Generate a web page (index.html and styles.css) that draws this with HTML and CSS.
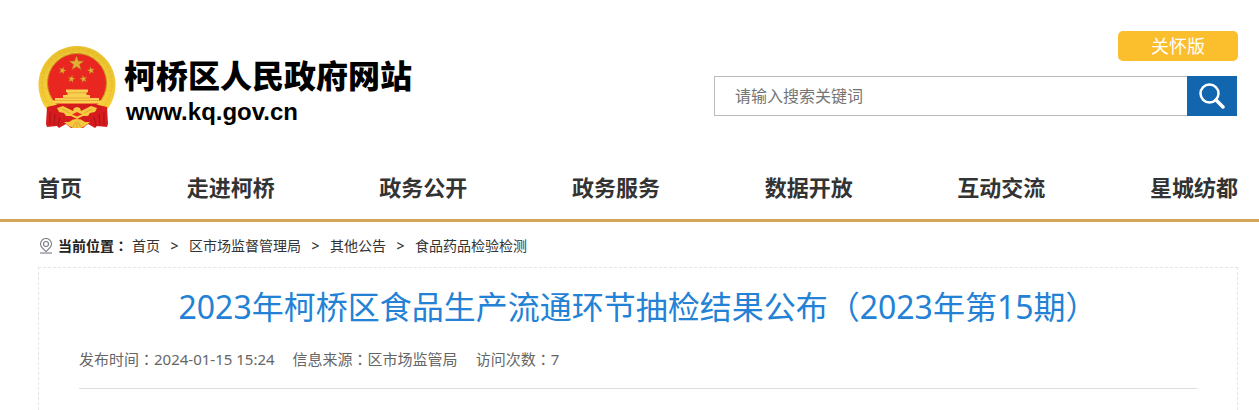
FILE: index.html
```html
<!DOCTYPE html>
<html lang="zh-CN">
<head>
<meta charset="utf-8">
<meta name="viewport" content="width=device-width, initial-scale=1">
<title>2023年柯桥区食品生产流通环节抽检结果公布（2023年第15期）</title>
<link rel="stylesheet" href="styles.css">
</head>
<body>
<header class="header">
  <div class="wrap header-row">
    <a class="brand" href="#">
      <svg class="emblem" viewBox="0 0 78 84" aria-hidden="true">
        <defs>
          <linearGradient id="gold" x1="0" y1="0" x2="0" y2="1">
            <stop offset="0" stop-color="#e8c02c"/><stop offset="1" stop-color="#f7cd38"/>
          </linearGradient>
          <path id="star" d="M0-7.5 1.8-2.4 7.1-2.3 2.9.9 4.4 6.1 0 3.1-4.4 6.1-2.9.9-7.1-2.3-1.8-2.4Z"/>
        </defs>
        <path fill="url(#gold)" d="M39 0C60 0 77.500 17 77.500 38.500 77.500 50 73 60 66 67L12 67C5 60 .5 50 .5 38.500.5 17 18 0 39 0Z"/>
        <circle cx="39" cy="38" r="35" fill="none" stroke="#d9ae25" stroke-width=".6" stroke-dasharray="3 2"/>
        <circle cx="39" cy="38" r="31.500" fill="none" stroke="#f7d655" stroke-width=".6" stroke-dasharray="5 3"/>
        <circle cx="39" cy="37" r="29.500" fill="#e92620" stroke="#c9911e" stroke-width="1"/>
        <g fill="#e0b035" stroke="#b87a20" stroke-width=".5">
          <use href="#star" transform="translate(38.500 17.500)"/>
          <use href="#star" transform="translate(24.500 24.500) rotate(18) scale(.5)"/>
          <use href="#star" transform="translate(53 24.500) rotate(-12) scale(.5)"/>
          <use href="#star" transform="translate(33.500 33) rotate(12) scale(.5)"/>
          <use href="#star" transform="translate(45.500 33) rotate(-12) scale(.5)"/>
        </g>
        <path fill="#d51b1d" d="M9 61 22 58H56L69 61 70 78 69 81 59 80 57 82 50 78 45 82H33L28 78 21 82 19 80 9 81 8 78Z"/>
        <path fill="none" stroke="#a91217" d="M12 66 12 79M17 68 16 79M22 71 20 80M66 66 66 79M61 68 62 79M56 71 58 80"/>
        <path fill="#fad050" d="M28 43.500H50V46L48.500 46.500V49H52V52H61V54.500H63V57.500H15V54.500H17V52H25V49H29.500V46.500L28 46Z"/>
        <path fill="none" stroke="#dc9428" stroke-width=".6" d="M29.500 46.800H48.500M25 52H52M17 54.500H61"/>
        <path fill="#f6c842" d="M19 62 25 60 31 63 35 65 36 62 39 61 42 62 43 65 47 63 53 60 59 62 57 66 52 67 50 70 45 70 39 73 33 70 28 70 26 67 21 66Z"/>
        <path fill="#e92620" d="M34 68.500 39 66 44 68.500 39 70.500Z"/>
        <path fill="#f6c842" d="M26 76 31 76 35 73.500 39 73 43 73.500 47 76 52 76 47 80 43 82H35L31 80Z"/>
        <path fill="none" stroke="#cf902a" stroke-width=".6" d="M24 63 32 67M54 63 46 67M35 81 38 76M43 81 40 76M39 76V82"/>
      </svg>
      <span class="brand-text">
        <span class="brand-name">柯桥区人民政府网站</span>
        <span class="brand-url">www.kq.gov.cn</span>
      </span>
    </a>
    <div class="tools">
      <button class="care" type="button">关怀版</button>
      <form class="search">
        <input class="search-input" type="text" placeholder="请输入搜索关键词" aria-label="请输入搜索关键词">
        <button class="search-btn" type="submit" aria-label="搜索">
          <svg class="search-icon" viewBox="0 0 26 26" aria-hidden="true">
            <circle cx="10.500" cy="10.500" r="9" fill="none" stroke="#fff" stroke-width="2.500"/>
            <path d="M17 17 24 24" stroke="#fff" stroke-width="3.500" stroke-linecap="round"/>
          </svg>
        </button>
      </form>
    </div>
  </div>
</header>
<nav class="nav">
  <div class="wrap nav-row">
    <a href="#">首页</a>
    <a href="#">走进柯桥</a>
    <a href="#">政务公开</a>
    <a href="#">政务服务</a>
    <a href="#">数据开放</a>
    <a href="#">互动交流</a>
    <a href="#">星城纺都</a>
  </div>
</nav>
<main class="wrap">
  <div class="crumbs">
    <svg class="pin" viewBox="0 0 14 16" aria-hidden="true">
      <g fill="none" stroke="#777b85" stroke-width="1.100">
        <path d="M7 13.500C4 10.800 1.500 9 1.500 6a5.500 5.500 0 0 1 11 0C12.500 9 10 10.800 7 13.500Z"/>
        <circle cx="7" cy="6" r="2.500"/>
        <path d="M1 15H13"/>
      </g>
    </svg>
    <strong class="crumb-label">当前位置<span class="colon">：</span></strong>
    <a href="#">首页</a><span class="sep">&gt;</span>
    <a href="#">区市场监督管理局</a><span class="sep">&gt;</span>
    <a href="#">其他公告</a><span class="sep">&gt;</span>
    <a href="#">食品药品检验检测</a>
  </div>
  <article class="article">
    <h1 class="title">2023年柯桥区食品生产流通环节抽检结果公布（2023年第15期）</h1>
    <div class="meta">
      <span>发布时间<span class="colon">：</span>2024-01-15 15:24</span>
      <span>信息来源<span class="colon">：</span>区市场监管局</span>
      <span>访问次数<span class="colon">：</span>7</span>
    </div>
  </article>
</main>
</body>
</html>
```

FILE: styles.css
```css
* {
  box-sizing: border-box;
}

html,
body {
  height: 100%;
}

body {
  display: flex;
  flex-direction: column;
  margin: 0;
  background: #fff;
  color: #333;
  font-family: "Noto Sans", "Noto Sans CJK SC", sans-serif;
  font-size: 14px;
}

a {
  color: inherit;
  text-decoration: none;
}

button,
input {
  font: inherit;
}

.wrap {
  width: 100%;
  padding: 0 21px 0 38px;
}

.header-row {
  display: flex;
  justify-content: space-between;
  padding-top: 31px;
}

.brand {
  display: flex;
  gap: 8px;
  padding-top: 15px;
  color: #000;
}

.emblem {
  width: 78px;
  height: 84px;
}

.brand-text {
  display: flex;
  flex-direction: column;
  padding-top: 10px;
}

.brand-name {
  font-size: 32px;
  font-weight: 900;
  line-height: 40px;
}

.brand-url {
  padding-left: 2px;
  font-family: "Liberation Sans", sans-serif;
  font-size: 24px;
  font-weight: 700;
  line-height: 32px;
}

.tools {
  display: flex;
  flex: 0 1 524px;
  flex-direction: column;
  align-items: flex-end;
  gap: 15px;
}

.care {
  width: 120px;
  height: 30px;
  padding: 0;
  border: 0;
  border-radius: 5px;
  background: #fbbe2c;
  color: #fff;
  font-size: 18px;
  line-height: 30px;
}

.search {
  display: flex;
  width: 100%;
  padding-right: 1px;
}

.search-input {
  flex: 1;
  min-width: 0;
  height: 40px;
  padding: 0 20px;
  border: 1px solid #bbb;
  border-right: 0;
  border-radius: 0;
  font-size: 16px;
}

.search-input::placeholder {
  color: #757575;
}

.search-btn {
  display: flex;
  align-items: center;
  justify-content: center;
  width: 50px;
  height: 40px;
  padding: 0;
  border: 0;
  background: #1266ad;
}

.search-icon {
  width: 26px;
  height: 26px;
}

.nav {
  margin-top: 27px;
  border-bottom: 3px solid #d3a658;
}

.nav-row {
  display: flex;
  justify-content: space-between;
  padding-bottom: 2px;
  font-size: 22px;
  font-weight: 700;
  line-height: 60px;
}

main.wrap {
  display: flex;
  flex: 1;
  flex-direction: column;
}

.crumbs {
  display: flex;
  align-items: center;
  padding: 9px 0 6px;
  line-height: 30px;
}

.pin {
  width: 14px;
  height: 16px;
  margin: 0 5px 0 1px;
}

.crumb-label {
  margin-right: 4px;
  color: #222;
}

.sep {
  width: 29px;
  font-weight: 500;
  text-align: center;
}

.colon {
  font-family: "Noto Sans CJK TC", sans-serif;
  font-feature-settings: "locl" 0;
  line-height: 1;
}

.article {
  flex: 1;
  padding: 15px 40px 0;
  border: 1px dashed #e5e5e5;
  border-bottom: 0;
}

.title {
  margin: 0;
  color: #2382d5;
  font-size: 32px;
  font-weight: 400;
  line-height: 48px;
  text-align: center;
}

.meta {
  display: flex;
  gap: 18px;
  padding: 13px 0 14px;
  border-bottom: 1px solid #ddd;
  color: #666;
  font-size: 15px;
  line-height: 30px;
}
```
